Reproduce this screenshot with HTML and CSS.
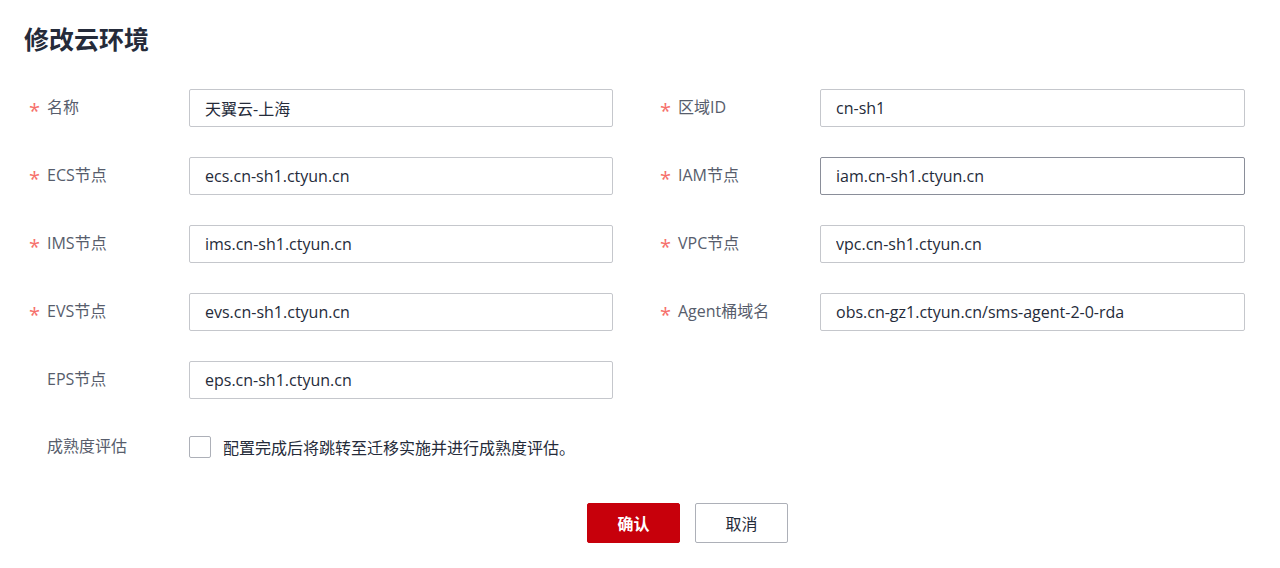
FILE: index.html
```html
<!DOCTYPE html>
<html lang="zh-CN">
<head>
  <meta charset="UTF-8">
  <meta name="viewport" content="width=device-width, initial-scale=1">
  <title>修改云环境</title>
  <link rel="stylesheet" href="styles.css">
</head>
<body>
  <div class="dialog">
    <h1 class="title">修改云环境</h1>

    <form class="form">
      <div class="field">
        <label class="label required">名称</label>
        <input class="input" type="text" value="天翼云-上海">
      </div>
      <div class="field">
        <label class="label required">区域ID</label>
        <input class="input" type="text" value="cn-sh1">
      </div>

      <div class="field">
        <label class="label required">ECS节点</label>
        <input class="input" type="text" value="ecs.cn-sh1.ctyun.cn">
      </div>
      <div class="field">
        <label class="label required">IAM节点</label>
        <input class="input hover" type="text" value="iam.cn-sh1.ctyun.cn">
      </div>

      <div class="field">
        <label class="label required">IMS节点</label>
        <input class="input" type="text" value="ims.cn-sh1.ctyun.cn">
      </div>
      <div class="field">
        <label class="label required">VPC节点</label>
        <input class="input" type="text" value="vpc.cn-sh1.ctyun.cn">
      </div>

      <div class="field">
        <label class="label required">EVS节点</label>
        <input class="input" type="text" value="evs.cn-sh1.ctyun.cn">
      </div>
      <div class="field">
        <label class="label required">Agent桶域名</label>
        <input class="input" type="text" value="obs.cn-gz1.ctyun.cn/sms-agent-2-0-rda">
      </div>

      <div class="field">
        <label class="label">EPS节点</label>
        <input class="input" type="text" value="eps.cn-sh1.ctyun.cn">
      </div>
      <div class="field"></div>

      <div class="field field-wide check-row">
        <label class="label">成熟度评估</label>
        <label class="check">
          <span class="box"></span>
          <span>配置完成后将跳转至迁移实施并进行成熟度评估。</span>
        </label>
      </div>
    </form>

    <div class="actions">
      <button class="btn btn-primary" type="button">确认</button>
      <button class="btn" type="button">取消</button>
    </div>
  </div>
</body>
</html>
```

FILE: styles.css
```css
body {
  margin: 0;
  padding: 0;
  background-color: #fff;
  color: #252b3a;
  font-family: 'Open Sans', 'Noto Sans CJK SC', sans-serif;
  width: 100vw;
  height: 100vh;
  overflow: hidden;
}

.dialog {
  padding: 22px 35px 0 28px;
}

.title {
  margin: 0 0 0 -4px;
  font-size: 25px;
  line-height: 34px;
  font-weight: bold;
  color: #252b3a;
}

.form {
  display: grid;
  grid-template-columns: 585px 586px;
  column-gap: 46px;
  row-gap: 30px;
  margin-top: 33px;
}

.field {
  display: flex;
  align-items: center;
  height: 38px;
}

.field-wide {
  grid-column: 1 / 3;
  margin-top: 6px;
  height: 24px;
}

.label {
  width: 161px;
  flex-shrink: 0;
  padding-left: 19px;
  box-sizing: border-box;
  position: relative;
  font-size: 16px;
  line-height: 22px;
  margin-top: -3px;
  color: #575d6c;
}

.label.required::before {
  content: "*";
  position: absolute;
  left: 1px;
  top: 5px;
  color: #f66f6a;
  font-size: 20px;
  line-height: 20px;
}

.input {
  width: 425px;
  height: 38px;
  box-sizing: border-box;
  border: 1px solid #c5c7cc;
  border-radius: 2px;
  padding: 0 15px;
  font-family: inherit;
  font-size: 16px;
  color: #252b3a;
  outline: none;
}

.input.hover {
  border-color: #8a8e99;
}

.check {
  display: flex;
  align-items: center;
  gap: 12px;
  font-size: 16px;
  color: #252b3a;
}

.check .box {
  width: 20px;
  height: 20px;
  border: 1px solid #adb0b8;
  border-radius: 2px;
  background: #fff;
}

.actions {
  display: flex;
  justify-content: center;
  gap: 15px;
  margin-top: 44px;
  padding-left: 102px;
}

.btn {
  width: 93px;
  height: 40px;
  box-sizing: border-box;
  border: 1px solid #adb0b8;
  border-radius: 2px;
  background: #fff;
  font-family: inherit;
  font-size: 16px;
  color: #252b3a;
}

.btn-primary {
  background: #c7000b;
  border-color: #c7000b;
  color: #fff;
  font-weight: bold;
}
```
